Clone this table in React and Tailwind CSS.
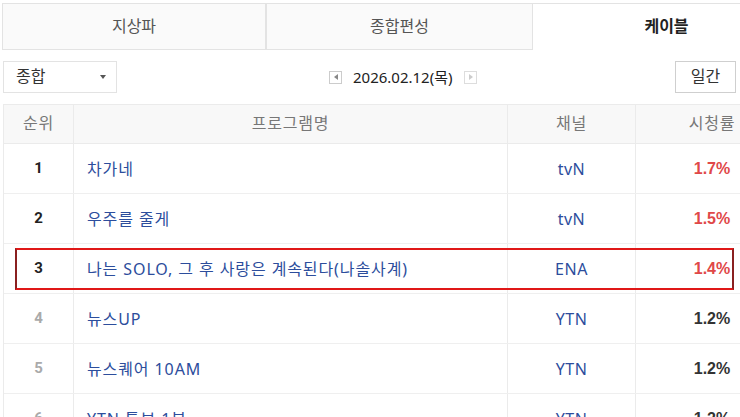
import React from 'react';

const rows = [
  { rank: 1, title: '차가네', channel: 'tvN', rating: '1.7%', top: true },
  { rank: 2, title: '우주를 줄게', channel: 'tvN', rating: '1.5%', top: true },
  { rank: 3, title: '나는 SOLO, 그 후 사랑은 계속된다(나솔사계)', channel: 'ENA', rating: '1.4%', top: true, mark: true },
  { rank: 4, title: '뉴스UP', channel: 'YTN', rating: '1.2%' },
  { rank: 5, title: '뉴스퀘어 10AM', channel: 'YTN', rating: '1.2%' },
  { rank: 6, title: 'YTN 특보 1부', channel: 'YTN', rating: '1.2%' },
];

const font = { fontFamily: '"Liberation Sans", "Noto Sans CJK KR", sans-serif' };
const kr = { fontFamily: '"Noto Sans", "Noto Sans CJK KR", sans-serif' };

export default function App() {
  return (
    <div className="w-[740px] h-[417px] overflow-hidden bg-white" style={font}>
      <div className="w-[800px] pt-[3px] pl-[2px]">
        {/* tabs */}
        <div className="flex h-[47px] text-[16px]">
          <div className="w-[264px] flex items-center justify-center bg-[#fafafa] border border-[#e3e3e3] text-[#555]">지상파</div>
          <div className="w-[267px] flex items-center justify-center bg-[#fafafa] border border-[#e3e3e3] text-[#555]">종합편성</div>
          <div className="w-[267px] flex items-center justify-center border-t border-[#e3e3e3] font-bold text-[#222]">케이블</div>
        </div>

        {/* controls */}
        <div className="flex items-center h-[32px] mt-[11px] pl-px pr-[64px]">
          <div className="w-[114px] h-[32px] flex items-center justify-between border border-[#e3e3e3] pl-3 pr-[10px] text-[16px] text-[#333]">
            <span>종합</span>
            <span className="w-0 h-0 border-l-[3px] border-r-[3px] border-t-[4px] border-l-transparent border-r-transparent border-t-[#555]" />
          </div>
          <div className="flex items-center ml-[212px] text-[15px] text-[#222]">
            <span className="w-[13px] h-[13px] border border-[#ccc] flex items-center justify-center">
              <span className="w-0 h-0 border-t-[3px] border-b-[3px] border-r-[4px] border-t-transparent border-b-transparent border-r-[#888]" />
            </span>
            <span className="ml-[11px] mr-[12px]" style={kr}>2026.02.12(목)</span>
            <span className="w-[13px] h-[13px] border border-[#ddd] flex items-center justify-center">
              <span className="w-0 h-0 border-t-[3px] border-b-[3px] border-l-[4px] border-t-transparent border-b-transparent border-l-[#ccc]" />
            </span>
          </div>
          <div className="ml-auto w-[61px] h-[32px] flex items-center justify-center border border-[#cfcfcf] text-[16px] text-[#333]">일간</div>
        </div>

        {/* table */}
        <div className="mt-[11px] ml-px border-l border-t border-[#ebebeb]">
          <div className="flex h-[39px] bg-[#f8f8f8] border-b border-[#ebebeb] text-[16px] text-[#777] tracking-[0.8px]">
            <div className="w-[70px] flex items-center justify-center border-r border-[#ebebeb]">순위</div>
            <div className="w-[434px] flex items-center justify-center border-r border-[#ebebeb]">프로그램명</div>
            <div className="w-[128px] flex items-center justify-center border-r border-[#ebebeb]">채널</div>
            <div className="w-[152px] flex items-center justify-center">시청률</div>
          </div>
          {rows.map((r) => (
            <div key={r.rank} className="relative flex h-[50px] border-b border-[#efefef]">
              <div className={`w-[70px] flex items-center justify-center border-r border-[#ebebeb] text-[15px] font-bold ${r.rank <= 3 ? 'text-[#222]' : 'text-[#aaa]'}`} style={{ fontFamily: 'Roboto, "Liberation Sans", sans-serif' }}>{r.rank}</div>
              <div className="w-[434px] flex items-center pl-[13px] border-r border-[#ebebeb] text-[16px] tracking-[0.9px] text-[#2c4d9c]" style={kr}>{r.title}</div>
              <div className="w-[128px] flex items-center justify-center border-r border-[#ebebeb] text-[16px] tracking-[0.5px] text-[#2c4d9c]" style={kr}>{r.channel}</div>
              <div className={`w-[152px] flex items-center justify-center text-[16px] font-bold ${r.top ? 'text-[#e04848]' : 'text-[#333]'}`}>{r.rating}</div>
              {r.mark && (
                <div className="absolute left-[11px] top-[4px] w-[719px] h-[42px] border-2 border-[#e01818] border-l-[#8a2020] border-r-[#8a2020]" />
              )}
            </div>
          ))}
        </div>
      </div>
    </div>
  );
}
